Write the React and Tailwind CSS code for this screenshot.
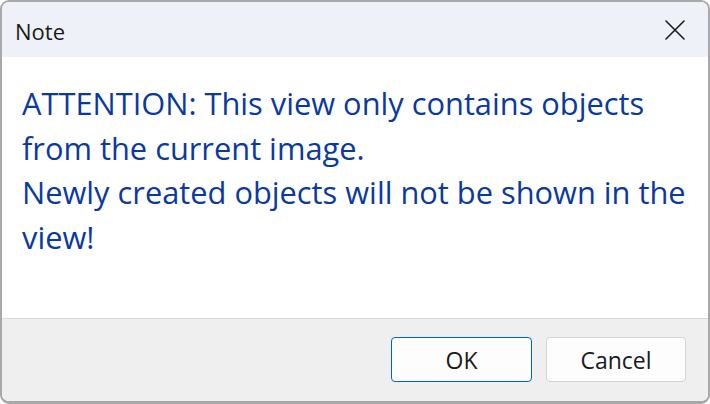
import React from 'react'

function CloseIcon() {
  return (
    <svg width="20" height="20" viewBox="0 0 20 20" fill="none" stroke="#1b1b1b" strokeWidth="1.6" strokeLinecap="round">
      <path d="M1 1 L19 19 M19 1 L1 19" />
    </svg>
  )
}

export default function App() {
  return (
    <div className="h-[404px] w-[710px] bg-white" style={{ fontFamily: '"Open Sans", "Noto Sans", sans-serif' }}>
      <div className="flex h-full flex-col overflow-hidden rounded-[9px] border-2 border-b-[3px] border-[#a8a8a8] bg-white">
        {/* title bar */}
        <div className="flex h-[55px] shrink-0 items-center justify-between bg-[#eef2f8] pl-[13px] pr-[23px]">
          <span className="pt-[3px] text-[22px] text-[#1a1a1a]">Note</span>
          <CloseIcon />
        </div>

        {/* message */}
        <div className="flex-1 pl-[20px] pr-[2px] pt-[24px]">
          <p className="text-[30.8px] leading-[44.5px] text-[#0a3aa0]">
            ATTENTION: This view only contains objects from the current image.
          </p>
          <p className="text-[30.8px] leading-[44.5px] text-[#0a3aa0]">
            Newly created objects will not be shown in the view!
          </p>
        </div>

        {/* buttons */}
        <div className="flex h-[83px] shrink-0 items-start justify-end gap-[14px] border-t border-[#dcdcdc] bg-[#efefef] pr-[22px] pt-[18px]">
          <button className="h-[45px] w-[141px] rounded-[4px] border border-[#0067c0] bg-[#fdfdfd] pt-[2px] text-[23px] text-[#1a1a1a]">
            OK
          </button>
          <button className="h-[45px] w-[140px] rounded-[4px] border border-[#d4d4d4] bg-[#fdfdfd] pt-[2px] text-[23px] text-[#1a1a1a]">
            Cancel
          </button>
        </div>
      </div>
    </div>
  )
}
